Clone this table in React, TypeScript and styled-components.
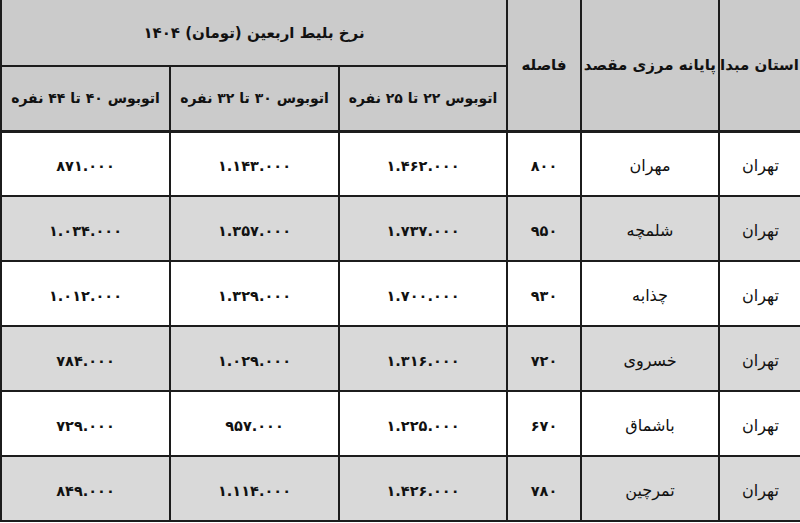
import React from "react";
import styled, { createGlobalStyle } from "styled-components";

const GlobalStyle = createGlobalStyle`
  html, body {
    margin: 0;
    padding: 0;
    background: #ffffff;
    overflow: hidden;
  }
`;

type Fare = {
  origin: string;
  dest: string;
  distance: string;
  small: string;
  medium: string;
  large: string;
};

const fares: Fare[] = [
  { origin: "تهران", dest: "مهران", distance: "۸۰۰", small: "۱.۴۶۲.۰۰۰", medium: "۱.۱۴۳.۰۰۰", large: "۸۷۱.۰۰۰" },
  { origin: "تهران", dest: "شلمچه", distance: "۹۵۰", small: "۱.۷۳۷.۰۰۰", medium: "۱.۳۵۷.۰۰۰", large: "۱.۰۳۴.۰۰۰" },
  { origin: "تهران", dest: "چذابه", distance: "۹۳۰", small: "۱.۷۰۰.۰۰۰", medium: "۱.۳۲۹.۰۰۰", large: "۱.۰۱۲.۰۰۰" },
  { origin: "تهران", dest: "خسروی", distance: "۷۲۰", small: "۱.۳۱۶.۰۰۰", medium: "۱.۰۲۹.۰۰۰", large: "۷۸۴.۰۰۰" },
  { origin: "تهران", dest: "باشماق", distance: "۶۷۰", small: "۱.۲۲۵.۰۰۰", medium: "۹۵۷.۰۰۰", large: "۷۲۹.۰۰۰" },
  { origin: "تهران", dest: "تمرچین", distance: "۷۸۰", small: "۱.۴۲۶.۰۰۰", medium: "۱.۱۱۴.۰۰۰", large: "۸۴۹.۰۰۰" },
];

const Table = styled.table`
  direction: rtl;
  width: 800px;
  table-layout: fixed;
  border-collapse: collapse;
  font-family: "DejaVu Sans", sans-serif;
  color: #111;
`;

const HeadRow = styled.tr<{ $top?: boolean }>`
  height: ${p => (p.$top ? 66 : 65)}px;
  background: #cbcbcb;

  th {
    border-top: ${p => (p.$top ? "none" : "2px solid #1c1c1c")};
  }
`;

const HeadCell = styled.th<{ $thick?: boolean; $size?: number }>`
  border: 2px solid #1c1c1c;
  border-bottom-width: ${p => (p.$thick ? "3px" : "2px")};
  padding: 0 2px;
  font-size: ${p => p.$size ?? 14}px;
  font-weight: bold;
  text-align: center;
  vertical-align: middle;
  white-space: nowrap;
  overflow: hidden;

  &:first-child {
    border-right: none;
  }
`;

const Row = styled.tr<{ $shade: boolean }>`
  height: 65px;
  background: ${p => (p.$shade ? "#d9d9d9" : "#ffffff")};
`;

const Cell = styled.td<{ $bold?: boolean }>`
  border: 2px solid #1c1c1c;
  padding: 4px 2px 0;
  font-size: ${p => (p.$bold ? "14.5px" : "16px")};
  font-weight: ${p => (p.$bold ? "bold" : "normal")};
  text-align: center;
  vertical-align: middle;
  white-space: nowrap;

  &:first-child {
    border-right: none;
  }
`;

export default function App() {
  return (
    <>
      <GlobalStyle />
      <Table>
        <colgroup>
          <col style={{ width: 82 }} />
          <col style={{ width: 138 }} />
          <col style={{ width: 74 }} />
          <col style={{ width: 168 }} />
          <col style={{ width: 169 }} />
          <col style={{ width: 169 }} />
        </colgroup>
        <thead>
          <HeadRow $top>
            <HeadCell rowSpan={2} $thick $size={15}>استان مبدا</HeadCell>
            <HeadCell rowSpan={2} $thick $size={15}>پایانه مرزی مقصد</HeadCell>
            <HeadCell rowSpan={2} $thick $size={15}>فاصله</HeadCell>
            <HeadCell colSpan={3} $size={15}>نرخ بلیط اربعین (تومان) ۱۴۰۴</HeadCell>
          </HeadRow>
          <HeadRow>
            <HeadCell $thick>اتوبوس ۲۲ تا ۲۵ نفره</HeadCell>
            <HeadCell $thick>اتوبوس ۳۰ تا ۳۲ نفره</HeadCell>
            <HeadCell $thick>اتوبوس ۴۰ تا ۴۴ نفره</HeadCell>
          </HeadRow>
        </thead>
        <tbody>
          {fares.map((f, i) => (
            <Row key={f.dest} $shade={i % 2 === 1}>
              <Cell>{f.origin}</Cell>
              <Cell>{f.dest}</Cell>
              <Cell $bold>{f.distance}</Cell>
              <Cell $bold>{f.small}</Cell>
              <Cell $bold>{f.medium}</Cell>
              <Cell $bold>{f.large}</Cell>
            </Row>
          ))}
        </tbody>
      </Table>
    </>
  );
}
